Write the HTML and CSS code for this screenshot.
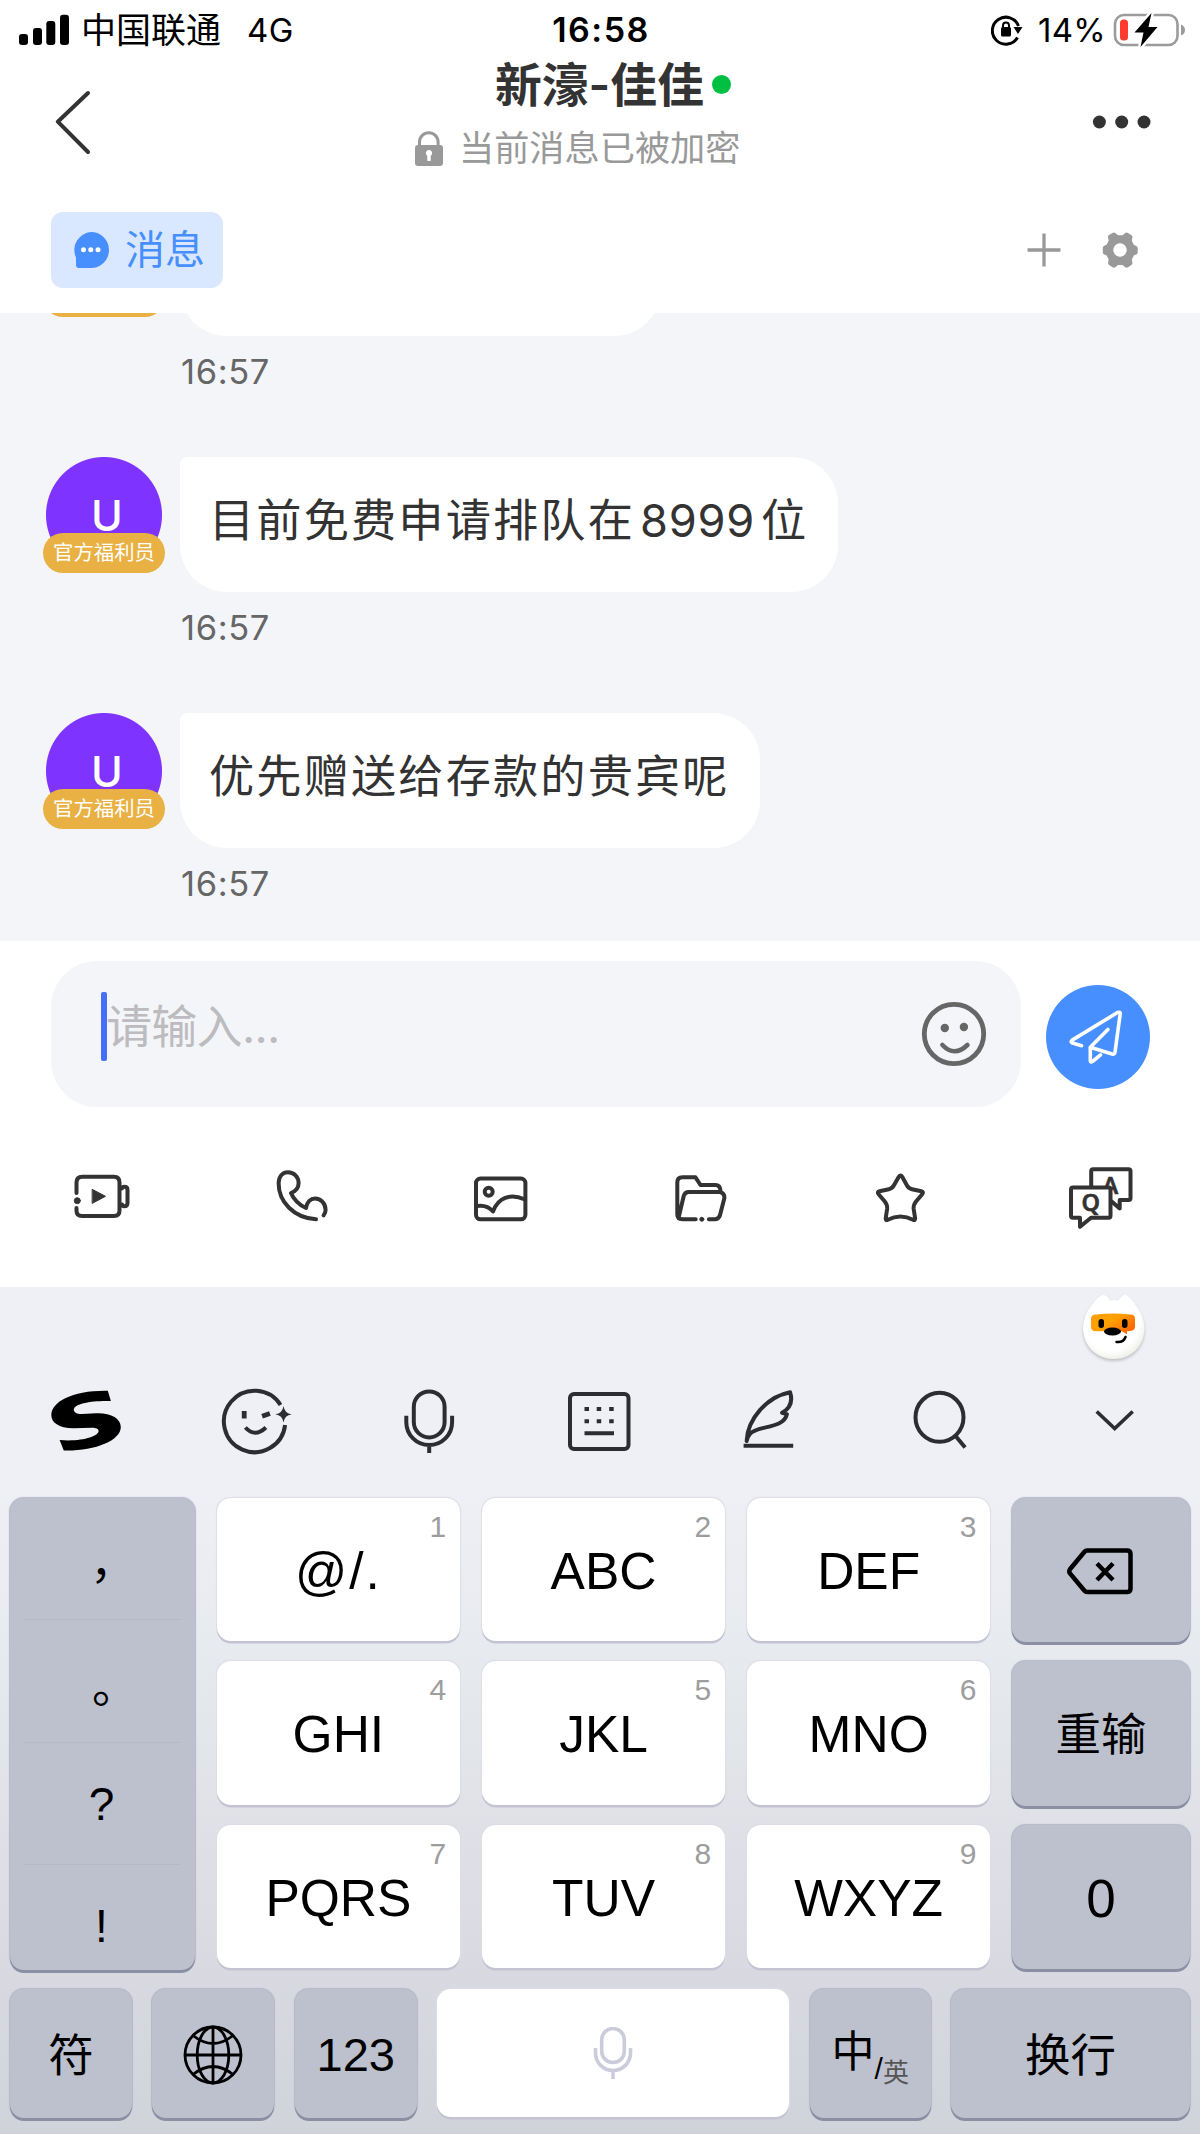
FILE: index.html
```html
<!DOCTYPE html>
<html lang="zh-CN">
<head>
<meta charset="utf-8">
<title>新濠-佳佳</title>
<link rel="stylesheet" href="styles.css">
</head>
<body>
<div class="screen">
  <header class="status">
    <div class="status-left">
      <svg class="signal" width="52" height="32" viewBox="18 13 52 32"><rect x="19" y="33" width="9" height="11" rx="3"/><rect x="33" y="27" width="9" height="17" rx="3"/><rect x="46.300" y="20" width="9" height="24" rx="3"/><rect x="60" y="13.700" width="9" height="30.300" rx="3"/></svg>
      <span class="carrier">中国联通</span><span class="network">4G</span>
    </div>
    <div class="status-time">16:58</div>
    <div class="status-right">
      <svg width="32" height="32" viewBox="991 15 32 32"><path d="M1017.500 38.500A13.500 13.500 0 1 1 1018.500 27" fill="none" stroke="#000" stroke-width="3"/><path d="M1013.500 28h9l-4.500 7z"/><rect x="1001" y="28" width="10" height="9.500" rx="1.500"/><path d="M1003 29v-2.500a3 3 0 0 1 6 0V29" fill="none" stroke="#000" stroke-width="2"/></svg>
      <span class="percent">14%</span>
      <svg width="74" height="36" viewBox="1112 11 74 36"><rect x="1115" y="14" width="62.500" height="30" rx="9" fill="none" stroke="#9b9b9b" stroke-width="2.600"/><path d="M1181 23.500q4 1.500 4 5.500t-4 5.500z" fill="#9b9b9b"/><rect x="1120" y="18.500" width="8" height="21" rx="3.500" fill="#ff3b30"/><path d="M1151.500 12l-17 19.500h9l-3 14.500 17-20h-9z" stroke="#fff" stroke-width="5"/><path d="M1151.500 12l-17 19.500h9l-3 14.500 17-20h-9z"/></svg>
    </div>
  </header>

  <nav class="nav">
    <svg class="back" width="50" height="74" viewBox="48 85 50 74"><path d="M88 93L57.800 121.700 88 152" fill="none" stroke="#333" stroke-width="4" stroke-linecap="round" stroke-linejoin="round"/></svg>
    <div class="nav-center">
      <div class="title">新濠-佳佳<i class="online"></i></div>
      <div class="subtitle">
        <svg width="30" height="37" viewBox="414 129 30 37"><path d="M419.500 146v-5a9.300 9.300 0 0 1 18.600 0v5" fill="none" stroke="#999" stroke-width="3"/><rect x="415" y="144" width="28" height="21" rx="3" fill="#999"/><path d="M429 149a3.200 3.200 0 0 1 1.700 5.900v5h-3.400v-5A3.200 3.200 0 0 1 429 149z" fill="#fff"/></svg>
        <span>当前消息已被加密</span>
      </div>
    </div>
    <svg class="more" width="60" height="20" viewBox="1092 111.700 60 20" fill="#333"><circle cx="1099.400" cy="121.700" r="6.500"/><circle cx="1121.700" cy="121.700" r="6.500"/><circle cx="1144" cy="121.700" r="6.500"/></svg>
  </nav>

  <div class="tabs">
    <div class="tab">
      <svg width="38" height="38" viewBox="73 231 38 38"><path d="M92 232a18 18 0 0 1 0 36H80q-3 0-3-3v-7.500A18 18 0 0 1 92 232z" fill="#478fff"/><g fill="#fff"><circle cx="84.500" cy="249.700" r="2.500"/><circle cx="91.800" cy="249.700" r="2.500"/><circle cx="99" cy="249.700" r="2.500"/></g></svg>
      <span>消息</span>
    </div>
    <div class="tab-actions">
      <svg width="36" height="36" viewBox="1025.500 231.500 36 36"><path d="M1027 249.500h33M1043.500 233v33" stroke="#999" stroke-width="3.300"/></svg>
      <svg width="38" height="38" viewBox="1100.500 230.500 38 38"><path fill="#999" fill-rule="evenodd" d="M1112 232.500q1.500-1 3 .2l2.500 2h4.500l2.500-2q1.500-1.200 3-.2l3.500 2.200q1.300 1 .9 2.600l-.6 2.900 2 4 2.300 1.200q1.600.6 1.600 2v4.500q0 1.300-1.500 2l-2.400 1.100-2 4 .6 3q.3 1.600-1 2.500l-3.400 2.200q-1.500 1-3-.2l-2.500-2H1117.500l-2.500 2q-1.500 1.200-3 .2l-3.500-2.200q-1.300-1-.9-2.600l.6-2.900-2-4-2.400-1.100q-1.500-.7-1.500-2v-4.600q0-1.400 1.600-2l2.300-1.200 2-4-.6-2.900q-.4-1.600.9-2.600zM1119.500 242.800a6.700 6.700 0 1 0 .01 0z"/></svg>
    </div>
  </div>

  <main class="chat">
    <section class="message">
      <div class="avatar avatar-blank"><span class="badge"></span></div>
      <div class="message-body"><div class="bubble bubble-blank"></div><time>16:57</time></div>
    </section>
    <section class="message">
      <div class="avatar"><b>U</b><span class="badge">官方福利员</span></div>
      <div class="message-body"><div class="bubble">目前免费申请排队在<span class="num">8999</span>位</div><time>16:57</time></div>
    </section>
    <section class="message">
      <div class="avatar"><b>U</b><span class="badge">官方福利员</span></div>
      <div class="message-body"><div class="bubble">优先赠送给存款的贵宾呢</div><time>16:57</time></div>
    </section>
  </main>

  <div class="composer">
    <div class="input">
      <i class="caret"></i><span class="placeholder">请输入...</span>
      <svg width="68" height="68" viewBox="919.600 1000 68 68"><circle cx="953.600" cy="1034" r="29.700" fill="none" stroke="#666" stroke-width="4.800"/><circle cx="944.400" cy="1028" r="4.200" fill="#666"/><circle cx="963.500" cy="1027" r="4.200" fill="#666"/><path d="M942 1045q12 12.500 25 0" fill="none" stroke="#666" stroke-width="4.600" stroke-linecap="round"/></svg>
    </div>
    <div class="send">
      <svg width="104" height="104" viewBox="1045.500 985 104 104" fill="none" stroke="#fff" stroke-width="3.600" stroke-linecap="round" stroke-linejoin="round"><path d="M1081 1045.700l-9-2.600q-2.500-1.300-.3-3L1117 1012.500q3-1 2.700 1.500l-5.200 38.300q-.5 2.500-3 1.700l-21.700-6.700v13.500q.3 2 2.200.7l8-6.700M1107.400 1029.500l-17.600 17.800"/></svg>
    </div>
  </div>

  <div class="tools">
    <svg viewBox="60 1157 80 80"><path d="M76.500 1193v-10.500q0-5.800 5.800-5.800h31.700q5.500 0 5.500 5.800v28q0 5.500-5.500 5.500H82q-5.500 0-5.500-5.500v-2.500M121 1188.500h1q.5-1.800 2.200-1.800 3.300 0 3.300 3v13.500q0 3-3.300 3-1.700 0-2.200-1.800h-1"/><circle cx="77.300" cy="1200.700" r="3" class="solid"/><path d="M92.500 1189.500l13 6.800-13 6.900z" class="solid"/></svg>
    <svg viewBox="260 1157 80 80"><path d="M316 1219.300C294 1218 278.500 1202 278.600 1183c.4-7 4-10.700 9.400-10.700 6 0 10.600 4.700 10.600 10.700 0 5-3.600 8.500-7.600 10 2 5.500 8.500 12.300 15 15 1-6 4.700-9.500 9-9.500 6 0 10.600 5 10.600 11.500 0 2.300-.7 3.500-2 5.300"/></svg>
    <svg viewBox="460 1157 80 80"><rect x="476" y="1178.500" width="49.400" height="40.800" rx="4.500"/><circle cx="488.700" cy="1191.700" r="4"/><path d="M477 1206q10-1.500 16 5.500c5-14 17-18.500 32-12"/></svg>
    <svg viewBox="660 1157 80 80"><path d="M720.500 1190.500q-.5-5.500-5-5.500h-15l-5-7.700h-13q-5.200 0-5.200 5v32q0 5 5.200 5h13.200M679 1216l4.700-20q1.300-4 5-4h31q5 1 4.700 6l-4.500 17.500q-1.400 3.800-5 3.800h-6"/><circle cx="701.800" cy="1219.300" r="2" class="solid"/></svg>
    <svg viewBox="860 1157 80 80"><path d="M898.800 1176.800q1.800-2.600 3.400 0l4.800 8.700q1.600 2.900 5 3.700l9.300 2q2.800.8.900 3l-6.200 7.300q-2.700 3.400-2.400 7l1.500 9.700q.2 2.500-2 1.600-12.600-6.800-25.400 0-2.200.9-2-1.600l1.500-9.700q.3-3.600-2.400-7l-6.200-7.300q-1.900-2.200.9-3l9.300-2q3.400-.8 5-3.700z"/></svg>
    <svg viewBox="1060 1157 80 80"><path d="M1091.200 1186v-14.700q0-2 2-2h35.300q2 0 2 2v26.700q0 2-2 2h-8.800v8.500l-8-7"/><text x="1102.500" y="1194" class="glyph">A</text><path d="M1073 1187.500h35.500q2 0 2 2v26.200q0 2-2 2H1091l-11 9v-9h-7q-2 0-2-2V1189.500q0-2 2-2z" class="paper"/><text x="1081.500" y="1211" class="glyph">Q</text></svg>
  </div>

  <div class="keyboard">
    <div class="mascot">
      <svg width="70" height="72" viewBox="1079 1291 70 72"><defs><linearGradient id="mask" x1="0" y1="0" x2="1" y2=".6"><stop offset="0" stop-color="#ff9f0a"/><stop offset=".5" stop-color="#ffa000"/><stop offset="1" stop-color="#ff6a00"/></linearGradient><radialGradient id="face" cx=".45" cy=".4" r=".62"><stop offset=".75" stop-color="#fff"/><stop offset="1" stop-color="#f0f0e8"/></radialGradient></defs><path class="mascot-face" d="M1103 1295q4 0 7 5.500 4.500-.6 8.500 0 3-5.500 7-5.500 5 1.500 10.500 10.500a39 39 0 0 1 8.500 22c0 19-13.500 31.500-30.500 31.500s-31-12.500-31-31.500a40 40 0 0 1 8.500-22q6-9 11.500-10.500z" fill="url(#face)"/><path d="M1096 1314.500q18-2 34 0 5 .2 5 4v8q0 4-5 4.500l-3 .2v3l-5-3h-26q-5 0-5-4.500v-8q0-4 5-4.200z" fill="url(#mask)"/><rect x="1098.500" y="1319" width="5.500" height="9" rx="2.700"/><rect x="1122" y="1319" width="5.500" height="9" rx="2.700"/><ellipse cx="1112.500" cy="1331.500" rx="8.500" ry="4"/><path d="M1116.500 1342q7 .8 9-5" fill="none" stroke="#000" stroke-width="2.500" stroke-linecap="round"/></svg>
    </div>
    <div class="kb-tools">
      <svg viewBox="35.700 1380 100 100"><path d="M107.500 1390.700l3.100 10.300c-17-.7-37 2-37.100 8.700 0 3 4 4.500 8 4.300l14-.7c15-.6 25 5.200 25 13.700 0 14-27 24.300-57 23.500l-4.200-10.500c21 2 39-3.500 39-9 0-2.200-3-3.300-7-3.200l-18 .5C58 1428 51 1422.500 51 1415c0-13.500 22-25 56.500-24.300z" fill="#000" stroke="none"/></svg>
      <svg viewBox="207.100 1380 100 100"><path d="M280.600 1405a30.700 30.700 0 1 0 4.600 20"/><path d="M283.600 1406q1 7.300 8.200 8.300-7.200 1-8.200 8.300-1-7.300-8.200-8.300 7.200-1 8.200-8.300z" fill="#2c2c32" stroke="none"/><path d="M244.300 1411v7.500M262.200 1416.300l7.800-2.800" stroke-width="4.800"/><path d="M245.500 1427.500q9.500 10.500 20.500 0"/></svg>
      <svg viewBox="378.600 1380 100 100"><rect x="413.400" y="1391.400" width="30.800" height="46" rx="15.400"/><path d="M405.900 1415.700v6.500a22.900 22.900 0 0 0 45.800 0v-6.500M428.800 1445v8"/></svg>
      <svg viewBox="550 1380 100 100"><rect x="570" y="1394" width="58.500" height="55" rx="4"/><path d="M584.500 1409h4.500m7.700 0h4.500m8 0h4.500M584.500 1421.300h4.500m7.700 0h4.500m8 0h4.500M584.500 1433.300h29.500"/></svg>
      <svg viewBox="721.400 1380 100 100"><path d="M747 1441c1-22 20-44 43.500-48.700 2.500 8 .8 15.500-8 20.500l4.800 1.400c-3 15-30 11-37 19.800q-2.500 3-3.300 7z" stroke-linejoin="round"/><path d="M744 1445.700h49.600"/></svg>
      <svg viewBox="892.900 1380 100 100"><ellipse cx="939.400" cy="1417.300" rx="24" ry="24.500"/><path d="M955.500 1436l9.500 11.500"/></svg>
      <svg viewBox="1064.300 1380 100 100"><path d="M1097 1411.500l18 17 18-17" stroke-width="3.600"/></svg>
    </div>

    <div class="keys">
      <div class="key dark punct"><span>，</span><span>。</span><span>?</span><span>!</span></div>
      <div class="key"><sup>1</sup><span class="wide">@/.</span></div>
      <div class="key"><sup>2</sup>ABC</div>
      <div class="key"><sup>3</sup>DEF</div>
      <div class="key dark"><svg class="delete" width="70" height="60" viewBox="1063 1541 70 60"><path d="M1086 1550.500h40q3.500 0 3.500 3.500v34.500q0 3.500-3.500 3.500h-40q-1.500 0-2.500-1.200L1069 1573.500q-1.500-2.200 0-4.300l14.500-17.500q1-1.200 2.500-1.200zM1096 1563.500l16 16.500m0-16.500l-16 16.500" fill="none" stroke="#000" stroke-width="4.500"/></svg></div>
      <div class="key"><sup>4</sup>GHI</div>
      <div class="key"><sup>5</sup>JKL</div>
      <div class="key"><sup>6</sup>MNO</div>
      <div class="key dark cjk">重输</div>
      <div class="key"><sup>7</sup>PQRS</div>
      <div class="key"><sup>8</sup>TUV</div>
      <div class="key"><sup>9</sup>WXYZ</div>
      <div class="key dark zero">0</div>
    </div>
    <div class="bottom-keys">
      <div class="key dark cjk">符</div>
      <div class="key dark"><svg width="62" height="62" viewBox="-31 -31 62 62" fill="none" stroke="#000" stroke-width="2.800"><circle r="28"/><ellipse rx="15.800" ry="28"/><path d="M-28 0h56M0-28v56M-20-19.500q20 16 40 0M-20 19.500q20-16 40 0"/></svg></div>
      <div class="key dark digits">123</div>
      <div class="key space"><svg width="44" height="56" viewBox="-22 -26 44 56" fill="none" stroke="#cbccdb" stroke-width="3.600"><rect x="-11.300" y="-24.500" width="22.600" height="34" rx="11.300"/><path d="M-17.500-5v5a17.500 17.500 0 0 0 35 0v-5M0 17.500v8.500"/></svg></div>
      <div class="key dark lang"><span class="zh">中</span><span class="slash">/</span><span class="en">英</span></div>
      <div class="key dark cjk">换行</div>
    </div>
  </div>
</div>
</body>
</html>
```
FILE: styles.css
```css
* { box-sizing: border-box; }
body { margin: 0; background: #fff; font-family: Inter, "Noto Sans CJK SC", sans-serif; color: #333; }
svg { display: block; flex: none; }
.screen { width: 1200px; height: 2134px; overflow: hidden; display: flex; flex-direction: column; white-space: nowrap; }

.status { height: 60px; flex: none; display: grid; grid-template-columns: 1fr 1fr 1fr; align-items: center; padding: 0 14px 0 18px; color: #000; font-size: 33px; line-height: 60px; }
.status-left, .status-right { display: flex; align-items: center; }
.status-right { justify-content: flex-end; }
.carrier { margin-left: 11px; font-size: 35px; }
.network { margin-left: 26px; letter-spacing: .5px; }
.status-time { text-align: center; font-size: 34px; font-weight: 600; letter-spacing: 1.500px; margin-right: 2px; }
.percent { margin: 0 6px 0 15px; letter-spacing: .3px; }

.nav { height: 110px; flex: none; display: grid; grid-template-columns: 414px 1fr auto; padding-right: 48px; }
.back { margin: 25px 0 0 48px; }
.more { margin-top: 52px; }
.title { display: flex; align-items: center; height: 50px; padding-left: 81px; font-size: 46.800px; font-weight: 600; line-height: 49px; }
.online { width: 19px; height: 19px; margin: 0 0 1px 8px; border-radius: 50%; background: #00bf43; }
.subtitle { display: flex; align-items: center; gap: 15px; height: 56px; margin-top: 10px; font-size: 35.200px; line-height: 56px; color: #999; }

.tabs { height: 143px; flex: none; display: flex; align-items: flex-start; justify-content: space-between; padding: 42px 61.500px 0 51px; }
.tab { width: 172px; height: 76px; display: flex; align-items: center; gap: 15px; padding-left: 21px; border-radius: 12px; background: #d9e7ff; color: #478fff; font-size: 40px; line-height: 76px; }
.tab-actions { display: flex; align-items: center; gap: 39px; height: 75px; }

.chat { height: 628px; flex: none; overflow: hidden; display: flex; flex-direction: column; justify-content: flex-end; gap: 51px; padding: 0 0 23px 43px; background: #f4f5f8; }
.message { display: flex; flex: none; gap: 15px; height: 205px; }
.avatar { width: 122px; height: 116px; flex: none; display: flex; flex-direction: column; align-items: center; background: radial-gradient(circle at 61px 58px, #7f33ff 57.500px, transparent 58.500px); }
.avatar-blank { justify-content: flex-end; }
.avatar b { height: 76px; padding: 31px 0 0 6px; color: #fff; font-size: 43px; font-weight: 500; line-height: 54px; }
.badge { width: 122px; height: 40px; border-radius: 20px; background: #e9b143; color: #fff; font-size: 20.400px; line-height: 40px; text-align: center; }
.message-body { display: flex; flex-direction: column; align-items: flex-start; }
.bubble { height: 134.500px; padding: 0 30px 0 29px; border-radius: 8px 47px 47px 47px; background: #fff; font-size: 45.200px; letter-spacing: 2.150px; line-height: 127px; }
.bubble-blank { width: 481px; }
.num { margin: 0 6px 0 5px; letter-spacing: .7px; }
time { height: 70px; padding-left: 1px; font-size: 34.500px; line-height: 71px; letter-spacing: .6px; color: #666; }

.composer { height: 166px; flex: none; display: flex; gap: 24.500px; padding: 20px 0 0 51px; }
.input { width: 970px; height: 146px; display: flex; align-items: center; padding: 0 33.500px 0 50px; border-radius: 46px; background: #f4f5f8; }
.caret { width: 6px; height: 69px; margin-top: -16px; border-radius: 2px; background: #466ff4; }
.placeholder { flex: 1; margin: -17px 0 0 -1px; font-size: 46px; color: #bcbcc0; line-height: 70px; letter-spacing: -.7px; }
.send { width: 104px; height: 104px; margin-top: 24px; border-radius: 50%; background: #478fff; }

.tools { height: 180px; flex: none; display: grid; grid-template-columns: repeat(6, 1fr); place-items: center; }
.tools svg { width: 80px; height: 80px; fill: none; stroke: #333; stroke-width: 4; stroke-linecap: round; stroke-linejoin: round; }
.tools .solid { fill: #333; stroke-width: 1; }
.tools .paper { fill: #fff; }
.tools .glyph { fill: #333; stroke: #333; stroke-width: .6px; font-family: "Noto Sans", sans-serif; font-size: 23.500px; font-weight: 600; }

.keyboard { flex: 1; padding: 0 10px; background: linear-gradient(#eff0f5 24%, #e6e9ee 45%, #d9dae1 80%, #d1d3da); }
.mascot { height: 76px; display: flex; justify-content: flex-end; padding: 4px 41px 0 0; }
.mascot-face { filter: drop-shadow(0 2px 1.500px #0003); }
.kb-tools { height: 134.500px; margin: 0 -10px; display: grid; grid-template-columns: repeat(7, 1fr); justify-items: center; padding-top: 17px; }
.kb-tools svg { width: 100px; height: 100px; fill: none; stroke: #2c2c32; stroke-width: 4; }

.keys { display: grid; grid-template-columns: 185px 243.500px 243.500px 243.500px 178px; grid-template-rows: repeat(3, 148px); justify-content: space-between; row-gap: 15.700px; }
.key { position: relative; display: flex; align-items: center; justify-content: center; height: 143.500px; border-radius: 14px; background: #fff; box-shadow: 0 2.500px 0 #c3c3d3, 0 0 1px .500px #dcdde6; color: #000; font-family: "Liberation Sans", "Noto Sans CJK SC", sans-serif; font-size: 51.500px; line-height: 60px; padding-top: 3px; }
.key sup { position: absolute; top: 12px; right: 14px; font-size: 30px; line-height: 34px; color: #9d9da0; }
.wide { letter-spacing: 2px; }
.delete { margin: 0 5px 0 0; }
.dark { height: 144.500px; background: #bdc1ce; box-shadow: 0 3px 0 #8b8fa3, 0 0 1px .500px #b4b7c7; }
.key.cjk { font-size: 45.500px; padding-top: 6px; }
.digits { font-size: 47px; }
.zero { font-size: 53px; padding-top: 4px; }
.punct.key { grid-row: 1 / 4; height: 472px; flex-direction: column; justify-content: flex-start; padding-top: 0; font-size: 46px; }
.punct span { width: 157px; height: 122.500px; padding-right: 2px; border-bottom: 1px solid #b7b8c8; text-align: center; line-height: 122px; }
.punct span:nth-child(1) { padding-left: 23px; line-height: 128px; }
.punct span:nth-child(2) { padding-left: 27px; line-height: 132px; }
.punct span:last-child { border: 0; }

.bottom-keys { display: grid; grid-template-columns: 122px 122px 122px 352px 121px 239px; justify-content: space-between; margin-top: 16px; }
.bottom-keys .key { height: 128.500px; }
.bottom-keys .dark { height: 129.500px; }
.lang.key { align-items: flex-start; justify-content: flex-start; padding: 0 0 0 22px; }
.zh { font-size: 43px; line-height: 127px; }
.slash { font-size: 30px; line-height: 160px; }
.en { font-size: 26px; line-height: 168px; color: #555; }
```
